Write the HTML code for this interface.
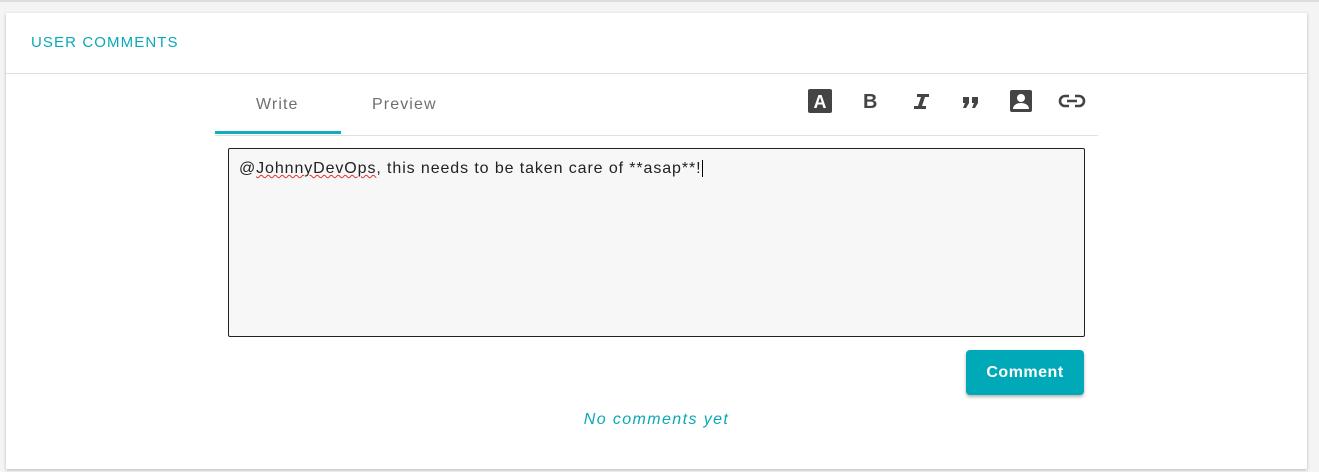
<!DOCTYPE html>
<html><head><style>
*{box-sizing:border-box;margin:0;padding:0}
body{width:1319px;height:472px;background:#f4f4f4;font-family:"Liberation Sans",sans-serif;position:relative;overflow:hidden}
.top{position:absolute;left:0;top:0;width:1319px;height:2px;background:#dcdcdc}
.card{position:absolute;left:6px;top:13px;width:1301px;height:456px;background:#fff;box-shadow:0 1px 3px rgba(0,0,0,.25)}
.hdr{height:61px;border-bottom:1px solid #e0e0e0;padding:21px 0 0 25px;color:#0aa8b8;font-size:15px;letter-spacing:1.1px}
.tabs{position:absolute;left:209px;top:61px;width:883px;height:62px;border-bottom:1px solid #e0e0e0}
.tab{position:absolute;top:22px;font-size:16px;color:#6f6f6f;letter-spacing:1.1px}
.ul{position:absolute;left:0;top:57px;width:126px;height:3px;background:#10adbc}
.ic{position:absolute;top:14px}
.ta{position:absolute;left:222px;top:135px;width:857px;height:189px;border:1px solid #222;border-radius:2px;background:#f7f7f7;padding:11px 10px;font-size:16px;color:#222;letter-spacing:0.9px}
.sq{text-decoration:underline wavy #e03030;text-decoration-thickness:1px}
.btn{position:absolute;left:960px;top:337px;width:118px;height:45px;background:#00a9b7;border-radius:4px;color:#fff;font-weight:bold;font-size:16px;text-align:center;line-height:45px;box-shadow:0 2px 3px rgba(0,0,0,.3);letter-spacing:0.5px}
.none{position:absolute;left:0;width:1301px;top:398px;text-align:center;color:#0aa8b8;font-style:italic;font-size:16px;letter-spacing:1.4px}
</style></head><body>
<div class="top"></div>
<div class="card">
<div class="hdr">USER COMMENTS</div>
<div class="tabs">
<div class="tab" style="left:41px">Write</div>
<div class="tab" style="left:157px">Preview</div>
<div class="ul"></div>
<svg class="ic" style="left:592px" width="26" height="26" viewBox="0 0 26 26"><rect x="1" y="1" width="24" height="24" rx="2" fill="#444"/><text x="13" y="20" text-anchor="middle" fill="#fff" font-family="Liberation Sans" font-weight="bold" font-size="18">A</text></svg>
<svg class="ic" style="left:646px" width="20" height="26"><text x="2" y="20" fill="#444" font-family="Liberation Sans" font-weight="bold" font-size="20">B</text></svg>
<svg class="ic" style="left:697px" width="20" height="26" viewBox="0 0 20 26"><path d="M5 6h12v3h-4l-3 9h4v3H2v-3h4l3-9H5z" fill="#444"/></svg>
<svg class="ic" style="left:745px" width="22" height="26" viewBox="0 0 22 26"><path d="M3 9h6v6l-3 5h-3l2-5h-2z M12 9h6v6l-3 5h-3l2-5h-2z" fill="#444"/></svg>
<svg class="ic" style="left:793px" width="26" height="26" viewBox="0 0 26 26"><rect x="2" y="2" width="22" height="22" rx="2" fill="#444"/><circle cx="13" cy="10" r="4" fill="#fff"/><path d="M5 21c0-4 4-6 8-6s8 2 8 6z" fill="#fff"/></svg>
<svg class="ic" style="left:843px" width="28" height="26" viewBox="0 0 28 26"><path d="M11 8H7a5 5 0 0 0 0 10h4M17 8h4a5 5 0 0 1 0 10h-4M9 13h10" fill="none" stroke="#444" stroke-width="2.6"/></svg>
</div>
<div class="ta">@<span class="sq">JohnnyDevOps</span>, this needs to be taken care of **asap**!<span style="border-left:1px solid #000;margin-left:1px"></span></div>
<div class="btn">Comment</div>
<div class="none">No comments yet</div>
</div>
</body></html>
